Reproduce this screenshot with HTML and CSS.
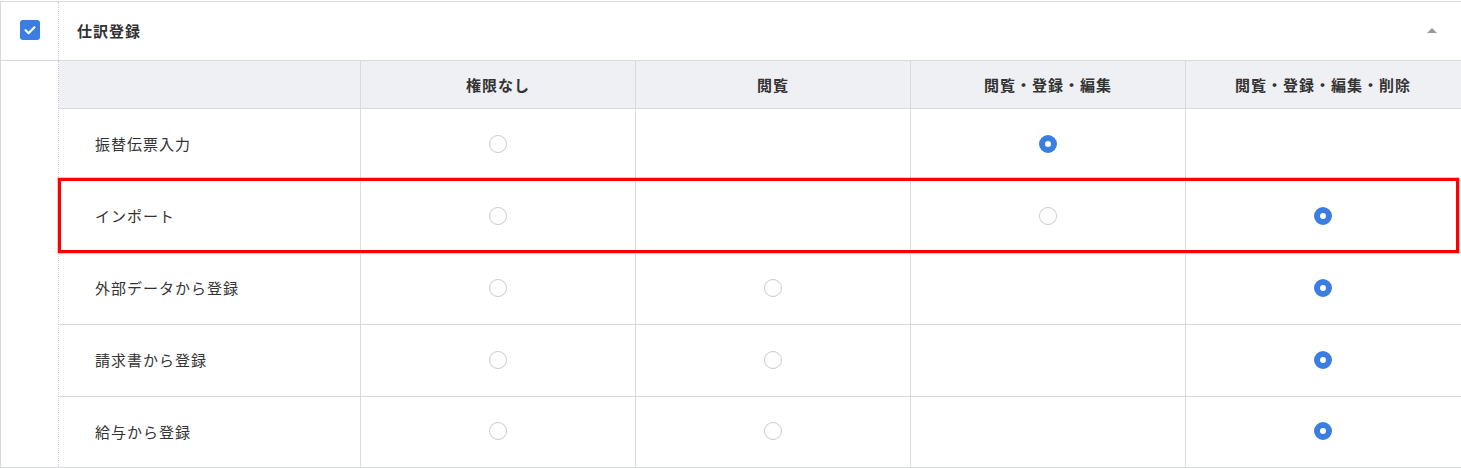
FILE: index.html
```html
<!DOCTYPE html>
<html lang="ja">
<head>
<meta charset="utf-8">
<link rel="stylesheet" href="styles.css">
</head>
<body>
<div class="panel">
  <div class="panel-head">
    <div class="side-cell">
      <span class="checkbox">
        <svg viewBox="0 0 20 20" width="20" height="20"><path d="M5.6 10.2l3 3 5.8-6" fill="none" stroke="#fff" stroke-width="2.2" stroke-linecap="round" stroke-linejoin="round"/></svg>
      </span>
    </div>
    <div class="head-main">
      <span class="title">仕訳登録</span>
      <span class="caret"></span>
    </div>
  </div>
  <div class="panel-body">
    <div class="side-cell"></div>
    <div class="table">
      <div class="row thead">
        <div class="cell label"></div>
        <div class="cell">権限なし</div>
        <div class="cell">閲覧</div>
        <div class="cell">閲覧・登録・編集</div>
        <div class="cell">閲覧・登録・編集・削除</div>
      </div>
      <div class="row">
        <div class="cell label">振替伝票入力</div>
        <div class="cell"><span class="radio"></span></div>
        <div class="cell"></div>
        <div class="cell"><span class="radio on"></span></div>
        <div class="cell"></div>
      </div>
      <div class="row highlight">
        <div class="cell label">インポート</div>
        <div class="cell"><span class="radio"></span></div>
        <div class="cell"></div>
        <div class="cell"><span class="radio"></span></div>
        <div class="cell"><span class="radio on"></span></div>
        <div class="mark"></div>
      </div>
      <div class="row">
        <div class="cell label">外部データから登録</div>
        <div class="cell"><span class="radio"></span></div>
        <div class="cell"><span class="radio"></span></div>
        <div class="cell"></div>
        <div class="cell"><span class="radio on"></span></div>
      </div>
      <div class="row">
        <div class="cell label">請求書から登録</div>
        <div class="cell"><span class="radio"></span></div>
        <div class="cell"><span class="radio"></span></div>
        <div class="cell"></div>
        <div class="cell"><span class="radio on"></span></div>
      </div>
      <div class="row last">
        <div class="cell label">給与から登録</div>
        <div class="cell"><span class="radio"></span></div>
        <div class="cell"><span class="radio"></span></div>
        <div class="cell"></div>
        <div class="cell"><span class="radio on"></span></div>
      </div>
    </div>
  </div>
</div>
</body>
</html>
```
FILE: styles.css
```css
html, body {
  margin: 0;
  padding: 0;
  background: #fff;
  overflow: hidden;
}
body {
  font-family: "Noto Sans CJK JP", "Noto Sans", sans-serif;
  color: #333;
  font-size: 15px;
  padding-top: 1px;
}
.panel {
  width: 1462px;
  border: 1px solid #d6d9de;
  box-sizing: border-box;
}
.panel-head {
  display: flex;
  height: 58px;
  border-bottom: 1px solid #d6d9de;
}
.side-cell {
  width: 57px;
  flex: none;
  border-right: 1px dotted #c9ccd2;
}
.panel-head .side-cell {
  display: flex;
  justify-content: center;
  align-items: center;
  padding-bottom: 2px;
}
.checkbox {
  width: 20px;
  height: 20px;
  border-radius: 3px;
  background: #3b7de0;
  display: block;
}
.checkbox svg { display: block; }
.head-main {
  flex: 1;
  display: flex;
  align-items: center;
  justify-content: space-between;
  padding-left: 18px;
  padding-right: 24px;
  padding-bottom: 2px;
}
.title {
  font-weight: bold;
  letter-spacing: 1px;
}
.caret {
  width: 0;
  height: 0;
  border-left: 5px solid transparent;
  border-right: 5px solid transparent;
  border-bottom: 5px solid #9a9a9a;
}
.panel-body {
  display: flex;
}
.table {
  flex: 1;
}
.row {
  display: grid;
  grid-template-columns: 301px repeat(4, 275px);
  height: 71px;
  border-bottom: 1px solid #d6d9de;
  position: relative;
}
.row.thead {
  height: 47px;
  background: #eff0f4;
}
.row.last {
  height: 70px;
  border-bottom: none;
}
.cell {
  display: flex;
  align-items: center;
  justify-content: center;
  border-left: 1px solid #dcdcdc;
  letter-spacing: 1px;
  padding-bottom: 2px;
}
.thead .cell {
  font-weight: bold;
  border-left-color: #d6d9de;
  padding-bottom: 1px;
}
.cell.label {
  justify-content: flex-start;
  padding-left: 36px;
  border-left: none;
}
.radio {
  width: 18px;
  height: 18px;
  border-radius: 50%;
  border: 1px solid #cbcbcb;
  box-sizing: border-box;
  background: #fff;
}
.radio.on {
  border: 6px solid #3b7de0;
  background: #fff;
}
.mark {
  position: absolute;
  top: -3px;
  bottom: -1px;
  left: -1px;
  right: 2px;
  border: 3px solid #ff0000;
  box-shadow: 0 0 0 0.5px rgba(255,0,0,0.5);
  pointer-events: none;
}
```
